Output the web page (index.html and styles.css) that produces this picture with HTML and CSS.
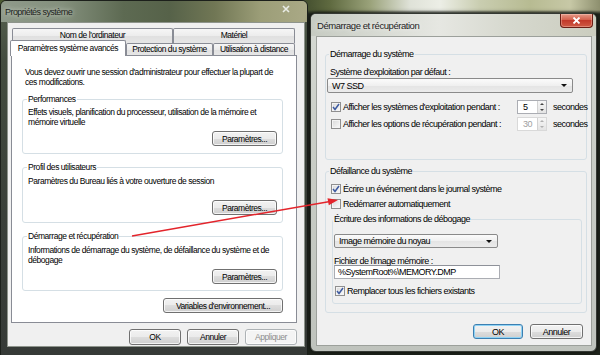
FILE: index.html
```html
<!DOCTYPE html>
<html>
<head>
<meta charset="UTF-8">
<title>Propriétés système</title>
<link rel="stylesheet" href="styles.css">
</head>
<body>

<!-- left window: system properties -->
<div class="window sysprops">
  <div class="titlebar">
    <span class="title">Propriétés système</span>
    <span class="close-inactive"><svg width="10" height="8" viewBox="0 0 10 8"><path d="M2 1 L8 7 M8 1 L2 7"/></svg></span>
  </div>
  <div class="client">
    <div class="tab-row back">
      <div class="tab tab-name">Nom de l'ordinateur</div>
      <div class="tab tab-hw">Matériel</div>
    </div>
    <div class="tab-row front">
      <div class="tab active tab-adv">Paramètres système avancés</div>
      <div class="tab tab-prot">Protection du système</div>
      <div class="tab tab-remote">Utilisation à distance</div>
    </div>
    <div class="tab-panel">
      <p class="intro">Vous devez ouvrir une session d'administrateur pour effectuer la plupart de<br>ces modifications.</p>

      <fieldset class="group perf">
        <legend>Performances</legend>
        <p>Effets visuels, planification du processeur, utilisation de la mémoire et<br>mémoire virtuelle</p>
        <div class="row-end"><button class="btn btn-settings">Paramètres...</button></div>
      </fieldset>

      <fieldset class="group profile">
        <legend>Profil des utilisateurs</legend>
        <p>Paramètres du Bureau liés à votre ouverture de session</p>
        <div class="row-end"><button class="btn btn-settings">Paramètres...</button></div>
      </fieldset>

      <fieldset class="group startup">
        <legend>Démarrage et récupération</legend>
        <p>Informations de démarrage du système, de défaillance du système et de<br>débogage</p>
        <div class="row-end"><button class="btn btn-settings">Paramètres...</button></div>
      </fieldset>

      <button class="btn btn-env">Variables d'environnement...</button>
    </div>
    <div class="dialog-buttons">
      <button class="btn">OK</button>
      <button class="btn">Annuler</button>
      <button class="btn" disabled>Appliquer</button>
    </div>
  </div>
</div>

<!-- right window: startup and recovery -->
<div class="window bootrec">
  <div class="titlebar">
    <span class="title">Démarrage et récupération</span>
    <span class="close-active"><svg width="9" height="7" viewBox="0 0 9 7"><path d="M1.5 0.5 L7.5 6.5 M7.5 0.5 L1.5 6.5"/></svg></span>
  </div>
  <div class="client">
    <fieldset class="group boot">
      <legend>Démarrage du système</legend>
      <div class="field-label">Système d'exploitation par défaut :</div>
      <div class="dropdown os-list"><span>W7 SSD</span><span class="caret"></span></div>

      <div class="spin-row first">
        <label class="check"><span class="cb on"><svg width="8" height="8" viewBox="0 0 8 8"><path d="M1 4 L3 6.5 L7 1"/></svg></span>Afficher les systèmes d'exploitation pendant :</label>
        <div class="spin"><span class="val">5</span><span class="arrows"><i class="up"></i><i class="down"></i></span></div>
        <span>secondes</span>
      </div>
      <div class="spin-row">
        <label class="check"><span class="cb"></span>Afficher les options de récupération pendant :</label>
        <div class="spin off"><span class="val">30</span><span class="arrows"><i class="up"></i><i class="down"></i></span></div>
        <span>secondes</span>
      </div>
    </fieldset>

    <fieldset class="group failure">
      <legend>Défaillance du système</legend>
      <label class="check line first"><span class="cb on"><svg width="8" height="8" viewBox="0 0 8 8"><path d="M1 4 L3 6.5 L7 1"/></svg></span>Écrire un événement dans le journal système</label>
      <label class="check line"><span class="cb"></span>Redémarrer automatiquement</label>

      <fieldset class="group debug">
        <legend>Écriture des informations de débogage</legend>
        <div class="dropdown dump-type"><span>Image mémoire du noyau</span><span class="caret"></span></div>
        <div class="field-label dump-label">Fichier de l'image mémoire :</div>
        <div class="textbox">%SystemRoot%\MEMORY.DMP</div>
        <label class="check line overwrite"><span class="cb on"><svg width="8" height="8" viewBox="0 0 8 8"><path d="M1 4 L3 6.5 L7 1"/></svg></span>Remplacer tous les fichiers existants</label>
      </fieldset>
    </fieldset>

    <div class="dialog-buttons">
      <button class="btn btn-ok focus">OK</button>
      <button class="btn btn-cancel">Annuler</button>
    </div>
  </div>
</div>

<!-- red annotation arrow -->
<svg class="pointer" width="600" height="355" viewBox="0 0 600 355">
  <line x1="132" y1="236" x2="330" y2="201.4" />
  <polygon points="338,200 327.5,198.3 328.8,205.2" />
</svg>

</body>
</html>
```

FILE: styles.css
```css
* { box-sizing: border-box; }

html, body { margin: 0; }

body {
  position: relative;
  width: 600px;
  height: 355px;
  overflow: hidden;
  font-family: "Liberation Sans", Arial, sans-serif;
  font-size: 8.5px;
  letter-spacing: -0.45px;
  color: #000;
  background:
    linear-gradient(to bottom, rgba(31,36,28,0) 0, rgba(31,36,28,0) 10px, #1f241c 14px),
    linear-gradient(to right, #4b5a33 0, #3f4a2c 300px, #5f6a40 330px, #9aa27a 370px, #dfe2d8 410px, #eceee6 440px, #c9cdb0 480px, #b7bb92 530px, #c7c8a6 570px, #8d8f6e 600px);
}

/* windows on the desktop */
.window {
  position: absolute;
  display: flex;
  flex-direction: column;
  border: 1px solid #1c201b;
  border-radius: 6px 6px 0 0;
}

.titlebar {
  display: flex;
  align-items: center;
  flex: none;
}

.client {
  flex: 1;
  display: flex;
  flex-direction: column;
  background: #f0f0f0;
  border: 1px solid #8e948c;
}

/* ---- left window ---- */
.sysprops {
  left: 0;
  top: 0;
  width: 308px;
  height: 356px;
  padding: 0 2px 8px 6px;
  background: linear-gradient(to bottom, #56614f 0, #434c3f 60px, #3a4039 60%, #363a37 100%);
}

.sysprops .titlebar {
  height: 21px;
  margin: 0 -2px 0 -6px;
  padding: 0 14px 0 4px;
  border-radius: 5px 5px 0 0;
  background: linear-gradient(to right, #8f9a8b 0, #84907d 20%, #5d6a52 40%, #566249 55%, #717755 70%, #9c9e78 85%, #aaa986 100%);
}

.sysprops .title {
  font-size: 9px;
  letter-spacing: -0.55px;
  color: #1d1f1c;
  text-shadow: 0 0 5px rgba(235,240,230,.9);
}

.close-inactive {
  margin-left: auto;
  margin-top: -6px;
  width: 14px;
  height: 10px;
  display: flex;
  align-items: center;
  justify-content: center;
}

.close-inactive path {
  stroke: #e9ece6;
  stroke-width: 1.6;
  fill: none;
}

.sysprops .client {
  padding-top: 5px;
}

/* tabs */
.tab-row {
  display: flex;
  align-items: flex-end;
}

.tab-row.back {
  height: 15px;
  margin-left: 4px;
}

.tab-row.front {
  position: relative;
  z-index: 1;
  height: 16px;
  margin: -3px 0 -1px 2px;
}

.tab {
  height: 15px;
  border: 1px solid #898c95;
  border-bottom: 0;
  border-radius: 2px 2px 0 0;
  background: linear-gradient(#f6f6f6, #ececec 50%, #e0e0e0 51%, #e6e6e6);
  text-align: center;
  line-height: 13px;
  white-space: nowrap;
}

.tab-row.front .tab {
  height: 12px;
  margin-bottom: 1px;
  line-height: 11px;
}

.tab-row.front .tab.active {
  height: 16px;
  margin-bottom: 0;
  background: #fff;
  line-height: 14px;
}

.tab-name { width: 161px; }
.tab-hw { width: 122px; }
.tab-adv { width: 116px; }
.tab-prot { width: 87px; }
.tab-remote { width: 82px; }

.tab-panel {
  display: flex;
  flex-direction: column;
  width: 286px;
  height: 268px;
  margin-left: 3px;
  padding: 11px 13px 0 10px;
  border: 1px solid #898c95;
  background: #fff;
}

.intro {
  margin: 0 0 7px 3px;
  line-height: 10px;
  white-space: nowrap;
}

/* group boxes */
.group {
  margin: 0;
  min-width: 0;
  border: 1px solid #d5dfe5;
  border-radius: 3px;
  padding: 0 5px 7px 5px;
}

.group legend {
  padding: 0 1px;
  margin-left: -1px;
  line-height: 10px;
}

.group p {
  margin: 4px 0 0;
  line-height: 10px;
  white-space: nowrap;
}

.row-end {
  display: flex;
  justify-content: flex-end;
  margin-top: 4px;
}

.perf p { margin-top: 3px; }
.profile, .startup { margin-top: 8px; }
.profile .row-end { margin-top: 14px; }
.startup { padding-bottom: 6px; }

/* buttons */
.btn {
  height: 15px;
  padding: 0;
  font: inherit;
  letter-spacing: inherit;
  color: #000;
  border: 1px solid #707070;
  border-radius: 3px;
  background: linear-gradient(#f2f2f2 0, #ebebeb 50%, #dddddd 50%, #cfcfcf 100%);
  box-shadow: inset 0 0 0 1px rgba(255,255,255,.75);
}

.btn:disabled {
  color: #8d8d8d;
  border-color: #adb2b5;
  background: #f4f4f4;
}

.btn-settings { width: 65px; }

.btn-env {
  width: 120px;
  margin-top: 7px;
  align-self: flex-end;
}

.dialog-buttons {
  display: flex;
  justify-content: flex-end;
  gap: 6px;
  margin-top: 6px;
  padding-right: 7px;
}

.sysprops .dialog-buttons .btn {
  width: 52px;
  height: 16px;
}

/* ---- right window ---- */
.bootrec {
  left: 310px;
  top: 13px;
  width: 287px;
  height: 339px;
  padding: 0 4px 5px 5px;
  border-color: #343833;
  border-radius: 6px;
  background: linear-gradient(to bottom, #d6dad4 0, #c9cdc6 40%, #bfc3bd 100%);
  box-shadow: 0 0 5px rgba(0,0,0,.6);
  font-size: 9px;
  letter-spacing: -0.5px;
}

.bootrec .titlebar {
  height: 22px;
  margin: 0 -4px 0 -5px;
  padding: 0 3px 0 6px;
  border-radius: 5px 5px 0 0;
  background: linear-gradient(to right, #c6cbc2 0, #d8dbd4 25%, #e6e7e2 45%, #d6d8ce 70%, #cbcdbf 100%);
}

.bootrec .title {
  font-size: 9.5px;
  letter-spacing: -0.45px;
  color: #1e1e1e;
  text-shadow: 0 0 5px rgba(255,255,255,.9);
}

.close-active {
  margin-left: auto;
  align-self: flex-start;
  width: 33px;
  height: 14px;
  display: flex;
  align-items: center;
  justify-content: center;
  border: 1px solid #6b1d14;
  border-top: 0;
  border-radius: 0 0 4px 4px;
  background: linear-gradient(#e59a88 0, #d4604c 45%, #c2392a 50%, #cf5a44 100%);
  box-shadow: inset 0 0 0 1px rgba(255,220,210,.35);
}

.close-active path {
  stroke: #fff;
  stroke-width: 1.8;
  fill: none;
}

.bootrec .client {
  padding: 12px 4px 0 8px;
  border-color: #9ca09b;
}

.bootrec .group {
  padding: 0 4px 0 4px;
}

.bootrec .group legend {
  line-height: 11px;
}

.field-label {
  margin-top: 7px;
  line-height: 11px;
}

/* combo boxes */
.dropdown {
  display: flex;
  align-items: center;
  justify-content: space-between;
  height: 15px;
  padding: 0 5px 0 4px;
  border: 1px solid #8a8a8a;
  border-radius: 2px;
  background: linear-gradient(#fbfbfb, #f0f0f0 50%, #e4e4e4 51%, #ebebeb);
}

.caret {
  width: 0;
  height: 0;
  border-left: 3px solid transparent;
  border-right: 3px solid transparent;
  border-top: 3px solid #111;
}

.os-list {
  width: 246px;
  margin-left: -3px;
}

/* checkboxes */
.check {
  display: flex;
  align-items: center;
  gap: 2px;
  white-space: nowrap;
}

.cb {
  width: 10px;
  height: 10px;
  flex: none;
  display: flex;
  align-items: center;
  justify-content: center;
  border: 1px solid #8f8f8f;
  background: linear-gradient(135deg, #d8d8d8, #fbfbfb);
  box-shadow: inset 0 0 0 1px #f4f4f4;
}

.cb path {
  stroke: #3d5aa0;
  stroke-width: 1.5;
  fill: none;
}

/* spinner rows */
.spin-row {
  display: grid;
  grid-template-columns: 180px 30px auto;
  column-gap: 6px;
  align-items: center;
  height: 15px;
  margin-top: 2px;
  padding-left: 1px;
}

.spin-row.first { margin-top: 6px; }

.spin {
  display: flex;
  height: 14px;
  border: 1px solid #abadb3;
  background: #fff;
}

.spin .val {
  flex: 1;
  padding-left: 5px;
  line-height: 12px;
}

.spin .arrows {
  width: 9px;
  display: flex;
  flex-direction: column;
  border-left: 1px solid #d2d2d2;
  background: linear-gradient(#f6f6f6, #e4e4e4);
}

.spin .arrows i {
  flex: 1;
  display: flex;
  align-items: center;
  justify-content: center;
}

.spin .arrows i::before {
  content: "";
  border-left: 2px solid transparent;
  border-right: 2px solid transparent;
}

.spin .up::before { border-bottom: 2px solid #444; }
.spin .down::before { border-top: 2px solid #444; }

.spin.off {
  border-color: #d9d9d9;
  color: #a0a0a0;
}

.spin.off .up::before { border-bottom-color: #b0b0b0; }
.spin.off .down::before { border-top-color: #b0b0b0; }

.boot { padding-bottom: 28px !important; }

.failure {
  margin-top: 6px;
  padding-bottom: 8px !important;
}

.check.line {
  height: 15px;
  padding-left: 1px;
}

.check.line.first { margin-top: 4px; }

.debug {
  margin: 3px 0 0 2px;
  padding: 0 4px 5px 1px !important;
}

.dump-type {
  width: 164px;
  height: 14px;
  margin-top: 9px;
}

.dump-label {
  margin-top: 8px;
  line-height: 10px;
}

.textbox {
  width: 166px;
  height: 14px;
  margin-top: -1px;
  padding-left: 3px;
  line-height: 12px;
  border: 1px solid #abadb3;
  border-top-color: #8e9199;
  background: #fff;
}

.check.overwrite {
  height: 14px;
  margin-top: 5px;
  padding-left: 1px;
}

.bootrec .dialog-buttons {
  gap: 7px;
  margin-top: 11px;
  padding-right: 4px;
}

.btn-ok { width: 50px; }
.btn-cancel { width: 53px; }

.btn.focus {
  border-color: #3c7fb1;
  box-shadow: inset 0 0 0 1px #8fd3f5;
}

/* annotation arrow */
.pointer {
  position: absolute;
  left: 0;
  top: 0;
  pointer-events: none;
}

.pointer line {
  stroke: #e3242b;
  stroke-width: 1.5;
}

.pointer polygon {
  fill: #e3242b;
}
```
